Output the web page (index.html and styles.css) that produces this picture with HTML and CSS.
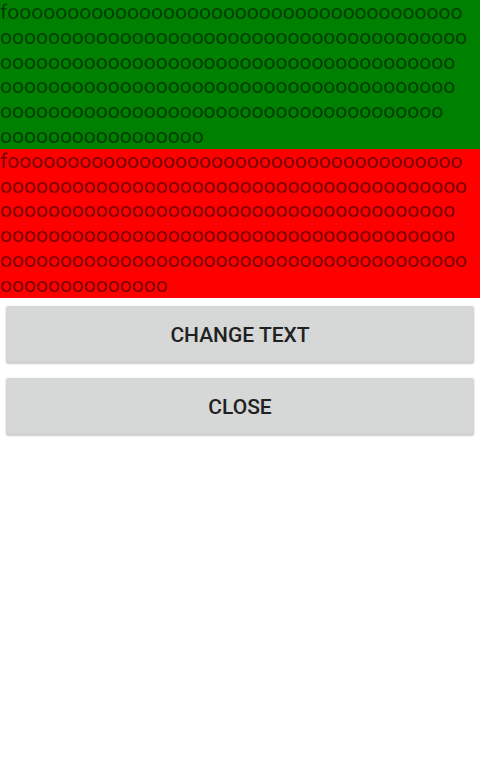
FILE: index.html
```html
<!DOCTYPE html>
<html lang="en">
<head>
  <meta charset="UTF-8">
  <title>Text Test</title>
  <link rel="stylesheet" href="styles.css">
</head>
<body>

  <div class="block green" id="first">
    foooooooooooooooooooooooooooooooooooooo<br>
    ooooooooooooooooooooooooooooooooooooooo<br>
    oooooooooooooooooooooooooooooooooooooo<br>
    oooooooooooooooooooooooooooooooooooooo<br>
    ooooooooooooooooooooooooooooooooooooo<br>
    ooooooooooooooooo
  </div>

  <div class="block red" id="second">
    foooooooooooooooooooooooooooooooooooooo<br>
    ooooooooooooooooooooooooooooooooooooooo<br>
    oooooooooooooooooooooooooooooooooooooo<br>
    oooooooooooooooooooooooooooooooooooooo<br>
    ooooooooooooooooooooooooooooooooooooooo<br>
    oooooooooooooo
  </div>

  <div class="actions">
    <button class="btn" id="change">Change text</button>
    <button class="btn" id="close">Close</button>
  </div>

</body>
</html>
```

FILE: styles.css
```css
body {
  margin: 0;
  font-family: Roboto, 'Noto Sans', sans-serif;
  background: #fff;
}

.block {
  font-size: 21px;
  line-height: 24.8px;
  color: rgba(0, 0, 0, 0.54);
  white-space: nowrap;
  overflow: hidden;
}

.green {
  background: #008000;
}

.red {
  background: #ff0000;
}

.actions {
  display: flex;
  flex-direction: column;
  padding: 8px 6px;
  gap: 16px;
}

.btn {
  height: 56px;
  padding: 2px 0 0;
  border: none;
  border-radius: 2px;
  background: #d6d7d7;
  box-shadow: 0 2px 2px rgba(0, 0, 0, 0.2), 0 0 2px rgba(0, 0, 0, 0.1);
  font-family: Roboto, sans-serif;
  font-size: 21px;
  font-weight: 500;
  text-transform: uppercase;
  color: #212121;
  cursor: pointer;
}
```
